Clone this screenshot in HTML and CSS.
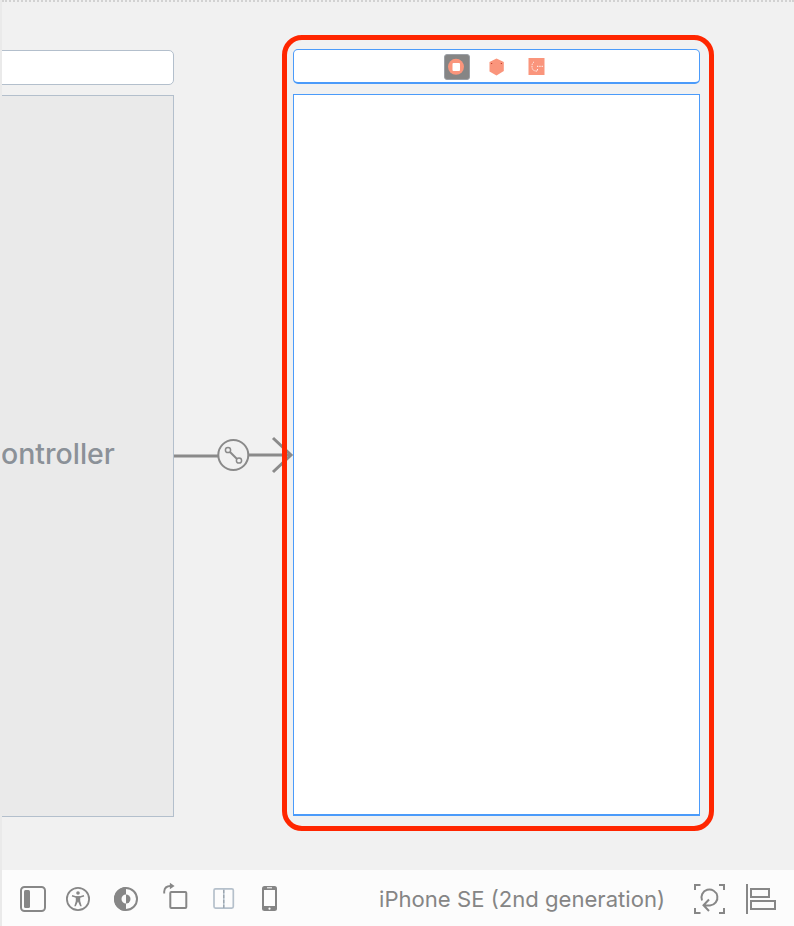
FILE: index.html
```html
<!DOCTYPE html>
<html lang="en">
<head>
<meta charset="utf-8">
<title>Storyboard</title>
<link rel="stylesheet" href="styles.css">
</head>
<body>
<div class="editor">
  <main class="canvas">
    <div class="scene-bar source-bar"></div>
    <div class="source-view"><span>ontroller</span></div>
    <svg class="segue" width="120" height="40" viewBox="0 0 120 40" fill="none" stroke="#8a8a8a">
      <path d="M0 21H44" stroke-width="3"/>
      <path d="M75 20H116" stroke-width="3"/>
      <path d="M99 3L117 20L99 37" stroke-width="3"/>
      <circle cx="59.3" cy="20" r="15" stroke-width="2"/>
      <path d="M56 17L63 24" stroke-width="2"/>
      <circle cx="54" cy="15" r="2.6" stroke-width="1.5"/>
      <circle cx="65" cy="25.5" r="2.6" stroke-width="1.5"/>
    </svg>
    <div class="scene-bar target-bar">
      <svg width="26" height="26" viewBox="0 0 26 26">
        <rect x=".5" y=".5" width="25" height="25" rx="2.5" fill="#858585" stroke="#9ba0a6"/>
        <circle cx="12" cy="12.8" r="8" fill="#fa957c"/>
        <rect x="8.5" y="9" width="7.5" height="8" rx="1" fill="#fff"/>
      </svg>
      <svg width="26" height="26" viewBox="0 0 26 26">
        <path d="M12.5 4.5L19.8 8V17L12.5 21.5L5.5 17.5V8Z" fill="#fa957c"/>
        <path d="M7 9.5h1.2M16.8 9.5H18" stroke="#c5402e" stroke-width="1.2"/>
      </svg>
      <svg width="26" height="26" viewBox="0 0 26 26">
        <rect x="4.5" y="4" width="16" height="17" fill="#fa957c"/>
        <path d="M10 8Q8 9 8 12.5Q8 17.5 13.5 17V15M13 12.3H19" fill="none" stroke="#fff" stroke-dasharray="1.3 1"/>
      </svg>
    </div>
    <div class="target-view"></div>
    <div class="highlight"></div>
  </main>
  <footer class="toolbar">
    <div class="tools">
      <svg width="32" height="34" viewBox="0 0 32 34" fill="none" stroke="#878787">
        <rect x="4" y="6" width="24" height="24" rx="3.5" stroke-width="2"/>
        <rect x="7" y="9" width="6" height="18" rx="1.5" fill="#878787" stroke="none"/>
      </svg>
      <svg width="32" height="34" viewBox="0 0 32 34" fill="none" stroke="#878787">
        <circle cx="13" cy="18" r="11.1" stroke-width="1.8"/>
        <circle cx="13" cy="12" r="1.8" fill="#878787" stroke="none"/>
        <path d="M7 14.7L11 16H15L19 14.7" stroke-width="1.5"/>
        <path d="M10.8 15.3H15.2V20L16.7 25.2H15.2L13 20.5L10.8 25.2H9.3L10.8 20Z" fill="#878787" stroke="none"/>
      </svg>
      <svg width="32" height="34" viewBox="0 0 32 34">
        <circle cx="13" cy="18" r="11" fill="none" stroke="#878787" stroke-width="2"/>
        <path d="M13 6A12 12 0 0 0 13 30V22.5A4.5 4.5 0 0 1 13 13.5Z" fill="#878787"/>
        <path d="M13 13.5A4.5 4.5 0 0 1 13 22.5Z" fill="#878787"/>
      </svg>
      <svg width="32" height="34" viewBox="0 0 32 34" fill="none" stroke="#878787">
        <rect x="9.3" y="11" width="16" height="16" rx="1" stroke-width="2"/>
        <path d="M3.2 12.5V10.5Q3.7 5 9.5 5" stroke-width="1.9"/>
        <path d="M8.9 1.8L13.6 5L8.9 8.2Z" fill="#878787" stroke="none"/>
      </svg>
      <svg width="32" height="34" viewBox="0 0 32 34" fill="none" stroke="#b5c0cb">
        <rect x="5" y="7.8" width="19.3" height="19.3" rx="1.5" stroke-width="1.7"/>
        <path d="M14.8 8V27" stroke-width="1.5"/>
        <path d="M14.8 9V27" stroke="#909aa3" stroke-width="1" stroke-dasharray="3 2"/>
      </svg>
      <svg width="32" height="34" viewBox="0 0 32 34">
        <rect x="5" y="5" width="15" height="25" rx="2.5" fill="#858585"/>
        <rect x="7" y="9" width="11" height="16" fill="#fdfdfd"/>
        <path d="M10 6.8h5" stroke="#fff"/>
        <circle cx="12.5" cy="27.7" r="1.1" fill="#fff"/>
      </svg>
    </div>
    <span class="device">iPhone SE (2nd generation)</span>
    <div class="actions">
      <svg width="32" height="34" viewBox="0 0 32 34" fill="none" stroke="#878787" stroke-width="2">
        <path d="M1 9V4H6.5M25 4H30V9M30 27V32H25M6.5 32H1V27"/>
        <path d="M8 19.5A8 8 0 1 1 16 24.5H10M15 18.5L9.5 24.3L15 30"/>
      </svg>
      <svg width="32" height="34" viewBox="0 0 32 34" fill="none" stroke="#878787" stroke-width="2">
        <path d="M1 3V33"/>
        <rect x="5" y="8" width="18" height="8"/>
        <rect x="5" y="20" width="24" height="8"/>
      </svg>
    </div>
  </footer>
</div>
</body>
</html>
```
FILE: styles.css
```css
* { box-sizing: border-box; }
body { margin: 0; font-family: Inter, "Liberation Sans", sans-serif; }
svg { display: block; flex: none; }

.editor {
  display: flex;
  flex-direction: column;
  width: 794px;
  height: 926px;
  border-left: 2px solid #eaeaea;
  overflow: hidden;
}
.canvas {
  position: relative;
  flex: 1;
  background: #f1f1f1;
  border-top: 2px dotted #d2d2d2;
}

/* Scenes are placed freely on the canvas */
.scene-bar { position: absolute; background: #fff; border-radius: 5px; }
.source-bar {
  left: -8px;
  top: 48px;
  width: 180px;
  height: 35px;
  border: 1px solid #b3bfcc;
}
.source-view {
  position: absolute;
  left: -2px;
  top: 93px;
  width: 174px;
  height: 722px;
  display: flex;
  align-items: center;
  padding-bottom: 4px;
  background: #eaeaea;
  border: 1px solid #b3bfcc;
  border-left-style: dotted;
  color: #8b9198;
  font-size: 28.5px;
  font-weight: 500;
  line-height: 34px;
}
.segue { position: absolute; left: 172px; top: 433px; }
.target-bar {
  left: 291px;
  top: 47px;
  width: 407px;
  height: 35px;
  display: flex;
  justify-content: center;
  gap: 14px;
  padding: 4px 0 0 1px;
  border: 1px solid #4b9bfa;
  border-bottom-width: 2px;
}
.target-view {
  position: absolute;
  left: 291px;
  top: 92px;
  width: 407px;
  height: 722px;
  background: #fff;
  border: 1px solid #4b9bfa;
  border-bottom-width: 2px;
}
.highlight {
  position: absolute;
  left: 280px;
  top: 33px;
  width: 432px;
  height: 796px;
  border: 5px solid #ff2600;
  border-radius: 20px;
}

.toolbar {
  display: flex;
  align-items: center;
  height: 56px;
  padding: 0 16px 0 15px;
  background: #fcfcfc;
}
.tools { display: flex; gap: 16px; }
.device {
  margin-left: auto;
  padding-top: 2px;
  color: #858585;
  font-size: 22.1px;
  line-height: 28px;
  white-space: nowrap;
}
.actions { display: flex; gap: 20px; margin-left: 29px; }
```
